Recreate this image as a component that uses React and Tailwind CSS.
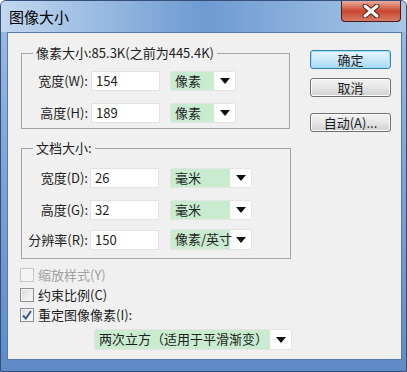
import React from "react";

const FONT = { fontFamily: '"Noto Sans CJK SC", "Noto Sans", sans-serif' };

function Field({ label, value, labelW = "w-[66px]", inputW = "w-[69px]", gap = "ml-[3px]" }) {
  return (
    <div className="flex items-center">
      <div className={`${labelW} text-right text-[13px] leading-[16px] text-[#1e1e1e]`}>{label}</div>
      <div
        className={`${gap} ${inputW} h-[20px] bg-white border border-[#e2e3e5] pl-[4px] text-[13px] leading-[18px] text-[#1e1e1e]`}
      >
        {value}
      </div>
    </div>
  );
}

function Select({ text, w, h = "h-[20px]" }) {
  return (
    <div className={`${w} ${h} flex bg-white border border-[#e4e4e4] rounded-[2px]`}>
      <div className="flex-1 min-w-0 bg-[#c9ecd1] pl-[4px] text-[13px] leading-[18px] text-[#1e1e1e] whitespace-nowrap">
        {text}
      </div>
      <div className="w-[21px] shrink-0 flex items-center justify-center">
        <svg width="10" height="6" viewBox="0 0 10 6">
          <path d="M0 0 H10 L5 6 Z" fill="#111" />
        </svg>
      </div>
    </div>
  );
}

function Button({ children, primary }) {
  return (
    <div
      className={`w-[81px] h-[19px] rounded-[3px] border flex items-center justify-center text-[13px] leading-[16px] text-[#1e1e1e] ${
        primary
          ? "border-[#3c7fb1] bg-linear-to-b from-[#e8f6fd] via-[#c9e9f8] to-[#a7d9f5] shadow-[inset_0_0_0_1px_#9fe0f7]"
          : "border-[#707070] bg-linear-to-b from-[#f3f3f3] via-[#e6e6e6] to-[#d0d0d0] shadow-[inset_0_0_0_1px_#fbfbfb]"
      }`}
    >
      {children}
    </div>
  );
}

function Check({ label, checked, disabled }) {
  return (
    <div className="flex items-center h-[20px]">
      <div
        className={`w-[14px] h-[14px] border flex items-center justify-center ${
          disabled
            ? "border-[#c8c8c8] bg-[#f4f4f4]"
            : "border-[#8e8f8f] bg-linear-to-br from-[#dcdcdc] to-[#fbfbfb] shadow-[inset_0_0_0_1px_#f4f4f4]"
        }`}
      >
        {checked && (
          <svg width="10" height="10" viewBox="0 0 10 10">
            <path d="M1 5.5 L3.8 8.5 L9 1" stroke="#3f5a91" strokeWidth="2" fill="none" />
          </svg>
        )}
      </div>
      <span
        className={`ml-[4px] text-[13px] leading-[16px] ${disabled ? "text-[#a0a0a0]" : "text-[#1e1e1e]"}`}
      >
        {label}
      </span>
    </div>
  );
}

export default function App() {
  return (
    <div
      style={FONT}
      className="w-[407px] h-[372px] flex flex-col rounded-t-[6px] border border-[#34507a] bg-linear-to-b from-[#9ebde3] via-[#7aa2d4] to-[#5f8cc6] overflow-hidden"
    >
      {/* Title bar */}
      <div className="h-[31px] flex items-start justify-between bg-linear-to-r from-[#c3d8ef] via-[#6e9bd2] to-[#a9c6e7]">
        <div className="ml-[8px] mt-[7px] text-[15px] leading-[18px] text-black">图像大小</div>
        <div className="mr-[5px] w-[60px] h-[21px] rounded-b-[4px] border border-t-0 border-[#4a1a14] bg-linear-to-b from-[#e9ad9f] via-[#c7442d] to-[#d67a63] flex items-center justify-center">
          <svg width="18" height="14" viewBox="0 0 18 14">
            <path d="M3 2 L15 12 M15 2 L3 12" stroke="#5b1d15" strokeWidth="5" strokeLinecap="round" />
            <path d="M3 2 L15 12 M15 2 L3 12" stroke="#ffffff" strokeWidth="3" strokeLinecap="round" />
          </svg>
        </div>
      </div>

      {/* Content */}
      <div className="ml-[6px] w-[395px] h-[328px] border border-[#557aa9] bg-[#f0f0f0] flex">
        <div className="ml-[13px] flex flex-col">
          {/* Pixel size */}
          <div className="mt-[20px] w-[269px] h-[76px] border border-[#a3a3a3] flex flex-col">
            <div className="-mt-[9px] ml-[11px] w-fit px-[3px] bg-[#f0f0f0] text-[13px] leading-[16px] text-[#1e1e1e]">
              像素大小:85.3K(之前为445.4K)
            </div>
            <div className="mt-[10px] flex items-center">
              <Field label="宽度(W):" value="154" />
              <div className="ml-[10px]">
                <Select text="像素" w="w-[66px]" />
              </div>
            </div>
            <div className="mt-[12px] flex items-center">
              <Field label="高度(H):" value="189" />
              <div className="ml-[10px]">
                <Select text="像素" w="w-[66px]" />
              </div>
            </div>
          </div>

          {/* Document size */}
          <div className="mt-[19px] w-[270px] h-[111px] border border-[#a3a3a3] flex flex-col">
            <div className="-mt-[9px] ml-[11px] w-fit px-[3px] bg-[#f0f0f0] text-[13px] leading-[16px] text-[#1e1e1e]">
              文档大小:
            </div>
            <div className="mt-[12px] flex items-center">
              <Field label="宽度(D):" value="26" gap="ml-[2px]" />
              <div className="ml-[11px]">
                <Select text="毫米" w="w-[82px]" />
              </div>
            </div>
            <div className="mt-[12px] flex items-center">
              <Field label="高度(G):" value="32" gap="ml-[2px]" />
              <div className="ml-[11px]">
                <Select text="毫米" w="w-[82px]" />
              </div>
            </div>
            <div className="mt-[9px] flex items-center">
              <Field label="分辨率(R):" value="150" gap="ml-[2px]" />
              <div className="ml-[11px]">
                <Select text="像素/英寸" w="w-[82px]" h="h-[21px]" />
              </div>
            </div>
          </div>

          {/* Options */}
          <div className="mt-[6px] -ml-[1px] flex flex-col">
            <Check label="缩放样式(Y)" disabled />
            <Check label="约束比例(C)" />
            <Check label="重定图像像素(I):" checked />
          </div>
          <div className="mt-[4px] ml-[73px]">
            <Select text="两次立方（适用于平滑渐变）" w="w-[198px]" h="h-[21px]" />
          </div>
        </div>

        {/* Buttons */}
        <div className="ml-[18px] mt-[17px] flex flex-col">
          <Button primary>确定</Button>
          <div className="mt-[9px]">
            <Button>取消</Button>
          </div>
          <div className="mt-[16px]">
            <Button>自动(A)...</Button>
          </div>
        </div>
      </div>
    </div>
  );
}
